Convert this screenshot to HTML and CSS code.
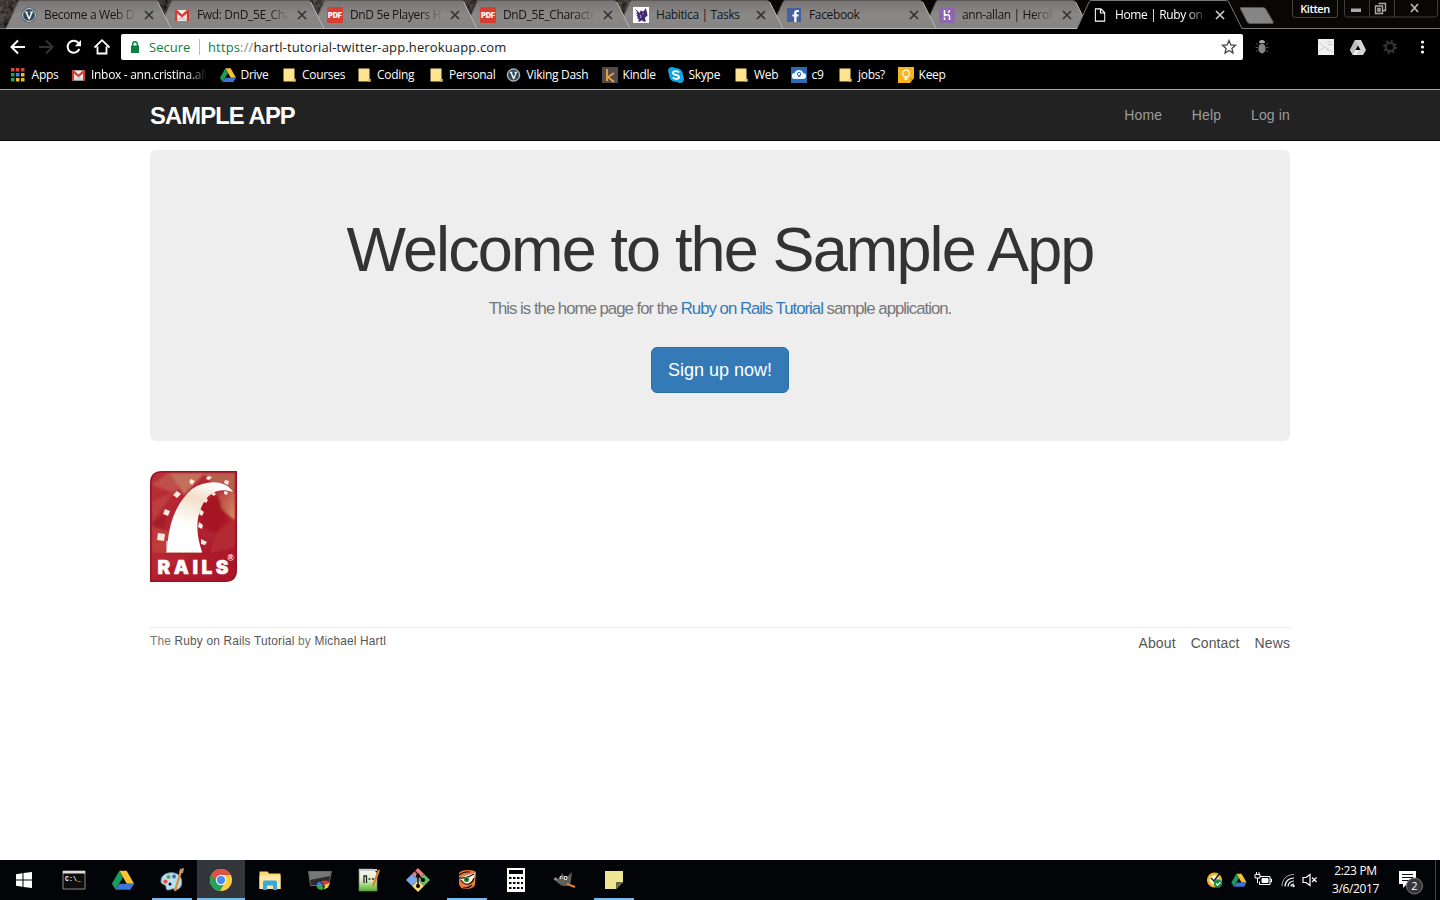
FILE: index.html
```html
<!DOCTYPE html>
<html lang="en">
<head>
<meta charset="utf-8">
<title>Home | Ruby on Rails Tutorial Sample App</title>
<link rel="stylesheet" href="styles.css">
</head>
<body>
<svg class="defs" aria-hidden="true">
  <defs>
    <linearGradient id="tabfill" x1="0" y1="0" x2="0" y2="1"><stop offset="0" stop-color="#777472"/><stop offset=".5" stop-color="#8a8887"/><stop offset="1" stop-color="#858483"/></linearGradient>
    <filter id="grain" x="0" y="0" width="1" height="1"><feTurbulence type="fractalNoise" baseFrequency=".22" numOctaves="2"/><feColorMatrix values="0 0 0 0 .24  0 0 0 0 .2  0 0 0 0 .17  .9 0 0 0 -.05"/></filter>
    <symbol id="tab" viewBox="0 0 166 29"><path d="M0 28.500L12 2Q12.700 .5 14 .5H149.500Q151 .5 151.700 2L165 28.500Z" fill="url(#tabfill)"/><path d="M0 28.500L12 2Q12.700 .5 14 .5H149.500" fill="none" stroke="#5d5b5a" stroke-width="1"/><path d="M151.700 2L165 28.500H0" fill="none" stroke="#b9b7b6"/></symbol>
    <symbol id="close" viewBox="0 0 10 10"><path d="M1 1L9 9M9 1L1 9" stroke="currentColor" stroke-width="1.700"/></symbol>
    <symbol id="viking" viewBox="0 0 16 16"><circle cx="8" cy="8" r="7.500" fill="#344957"/><circle cx="8" cy="8" r="6.400" fill="none" stroke="#d5e0e7" stroke-width="1"/><path d="M3.800 4.500h3v.9l-.5.3L8.300 10l1.500-4-.9-.7v-.8h3.300v.9l-.7.3L8.800 12.500H7.600L4.600 5.700l-.8-.3z" fill="#f1f5f7"/></symbol>
    <symbol id="gmail" viewBox="0 0 16 16"><path d="M1.500 3h13v11h-13z" fill="#eceaea"/><path d="M3 13l5-4 5 4" fill="#d2d0d0"/><path d="M1 3h2l5 4.500L13 3h2v11h-2.200V6.500L8 10.500 3.200 6.500V14H1z" fill="#d63b32"/></symbol>
    <symbol id="pdf" viewBox="0 0 16 16"><rect width="16" height="16" rx="1.500" fill="#d93d32"/><text x="8" y="10.800" text-anchor="middle" font-family="Inter" font-size="7.300" font-weight="900" textLength="14" lengthAdjust="spacingAndGlyphs" fill="#fff">PDF</text></symbol>
    <symbol id="folder" viewBox="0 0 13 14"><path d="M.5.5h11v10l1 .7v2.300H.5z" fill="#ffe48f"/><path d="M10 11h2.500v2.500H10z" fill="#e5c35c"/></symbol>
    <symbol id="gdrive" viewBox="0 0 24 22"><path d="M8 1h8l8 14h-8z" fill="#f9c12d"/><path d="M8 1l4 7-8 13.500L0 15z" fill="#1b9a5a"/><path d="M8.200 15H24l-4 6.500H4z" fill="#3d74d8"/></symbol>
    <symbol id="page" viewBox="0 0 11 14"><path d="M.8.8h5.500l4 4v8.400H.8zM6 1v4h4" fill="none" stroke="#fff" stroke-width="1.200"/></symbol>
  </defs>
</svg>

<header class="browser">
  <svg class="strip-bg" width="1440" height="29"><rect width="1440" height="29" fill="#080706"/><rect width="640" height="29" fill="#4b413a" filter="url(#grain)"/></svg>
  <div class="tabs">
    <div class="tab"><svg class="shape"><use href="#tab"/></svg><svg class="fav"><use href="#viking"/></svg><span class="ttl fade">Become a Web D</span><svg class="x"><use href="#close"/></svg></div>
    <div class="tab"><svg class="shape"><use href="#tab"/></svg><svg class="fav"><use href="#gmail"/></svg><span class="ttl fade">Fwd: DnD_5E_Cha</span><svg class="x"><use href="#close"/></svg></div>
    <div class="tab"><svg class="shape"><use href="#tab"/></svg><svg class="fav"><use href="#pdf"/></svg><span class="ttl fade">DnD 5e Players H</span><svg class="x"><use href="#close"/></svg></div>
    <div class="tab"><svg class="shape"><use href="#tab"/></svg><svg class="fav"><use href="#pdf"/></svg><span class="ttl fade">DnD_5E_Characte</span><svg class="x"><use href="#close"/></svg></div>
    <div class="tab"><svg class="shape"><use href="#tab"/></svg><svg class="fav" viewBox="0 0 16 16"><path fill="#fff" d="M0 0h16v16H0z"/><path d="M2 1.500l3 3 1.500 1.500L8 3l1 1.500L11 4l1.500-3L14 5l.5 4-2 1-.5 1.500 1 3h-3l-1-1.500-2 1.500H5L6 12l-2-.5 1-1.500-2-1.500 2-.5-2.500-2 2 .3z" fill="#432874"/><path d="M7 8l1 1.500L7 11M10.500 6.500l-1 .7" stroke="#fff" stroke-width=".7" fill="none"/></svg><span class="ttl">Habitica | Tasks</span><svg class="x"><use href="#close"/></svg></div>
    <div class="tab"><svg class="shape"><use href="#tab"/></svg><svg class="fav" viewBox="0 0 16 16"><path fill="#4560a0" d="M1 1h14v14H1z"/><path d="M8.200 15V9.600H6.400V7.400h1.800V5.800C8.200 3.800 9.400 2.900 11 2.900h1.800v2.100h-1.200c-.9 0-1.100.4-1.100 1.100v1.300h2.200l-.3 2.200h-1.900V15z" fill="#fff"/></svg><span class="ttl">Facebook</span><svg class="x"><use href="#close"/></svg></div>
    <div class="tab"><svg class="shape"><use href="#tab"/></svg><svg class="fav" viewBox="0 0 16 16"><rect width="16" height="16" rx="2" fill="#8d68b0"/><path d="M5.500 3v5.500c2-1 5-1.300 5 .8V13M10.500 3c0 1-.5 2-1.300 2.800M5.500 10.500v2.500" stroke="#fff" stroke-width="1.500" fill="none"/></svg><span class="ttl fade">ann-allan | Herok</span><svg class="x"><use href="#close"/></svg></div>
    <div class="tab active"><svg class="shape" viewBox="0 0 166 29"><path d="M0 28.500L12 2Q12.700 .5 14 .5H149.500Q151 .5 151.700 2L165 28.500V29H0z" fill="#000"/><path d="M0 28.500L12 2Q12.700 .5 14 .5H149.500Q151 .5 151.700 2L165 28.500" fill="none" stroke="#777"/></svg><svg class="fav" viewBox="-2.500 -1 16 16"><use href="#page" width="11" height="14"/></svg><span class="ttl fade">Home | Ruby on R</span><svg class="x"><use href="#close"/></svg></div>
    <svg class="newtab" viewBox="0 0 34 17"><path d="M1 .5h22q2 0 3 2l7 12q1 2-1 2H10q-2 0-3-2L.5 2Q0 .5 1 .5" fill="#858585" stroke="#555"/></svg>
    <div class="win">
      <span class="user">Kitten</span>
      <svg class="winbtns" viewBox="0 0 94 18"><path d="M.5 0v14q0 3 3 3h87q3 0 3-3V0M25.500 0v17M50.500 0v17" fill="none" stroke="#3e3e3e"/><path d="M7 8.500h10v3.500H7z" fill="#aaa"/><path d="M34.500 3.500h7v7h-3M31.500 6h7v7.500h-7zM34 8.500h2V11h-2z" fill="none" stroke="#aaa" stroke-width="1.400"/><path d="M67 4l7 8M74 4l-7 8" stroke="#b5b5b5" stroke-width="1.800"/></svg>
    </div>
  </div>
  <div class="toolbar">
    <svg class="nav" viewBox="0 0 112 18"><g fill="none" stroke="#fff" stroke-width="2"><path d="M16 9H3M9 2.500L2.500 9l6.500 6.500"/><path d="M30 9H43M37 2.500L43.500 9l-6.500 6.500" stroke="#333"/><path d="M69.500 5.200A6 6 0 1 0 70.300 10.800"/><path d="M85.500 9.500L93 2.200l7.500 7.300M88.500 8.500v7h9v-7" stroke-width="1.800"/></g><path d="M72 2v6.200h-6.200z" fill="#fff"/></svg>
    <div class="omni">
      <svg class="lock" viewBox="0 0 8 12"><path d="M0 4.500h8V12H0z" fill="#0b8043"/><path d="M1.700 5V3a2.300 2.300 0 0 1 4.600 0v2" fill="none" stroke="#0b8043" stroke-width="1.400"/></svg>
      <span class="secure">Secure</span><span class="bar"></span>
      <span class="url"><b>https</b><i>://</i>hartl-tutorial-twitter-app.herokuapp.com</span>
      <svg class="star" viewBox="0 0 16 16"><path d="M8 1.500l1.800 4.400 4.700.4-3.600 3.100 1.100 4.600L8 11.500 4 14l1.100-4.600-3.600-3.100 4.700-.4z" fill="none" stroke="#444" stroke-width="1.300"/></svg>
    </div>
    <svg class="exts" viewBox="0 0 190 20"><g stroke="#555" stroke-width="1" fill="none"><path d="M13 6l2 2M12.500 10.500H15M13 15l2-2M25 6l-2 2M25.500 10.500H23M25 15l-2-2"/></g><ellipse cx="19" cy="11.500" rx="3.600" ry="5" fill="#858585"/><path d="M16 6a3 3 0 0 1 6 0z" fill="#aaa"/>
      <path d="M75 2h16v16H75z" fill="#f1f1f1"/><path d="M84 5h5M85 7.500h5M76 14l6-4 8 5M83 12l3 2M76 5l6 6" stroke="#ccc" fill="none" stroke-width="1"/>
      <path d="M112 3h6l5 10-3 5h-10l-3-5z" fill="#d5d5d5"/><path d="M107 13h9l-3 5h-3z" fill="#efefef"/><path d="M112 3l3 5-5 10-3-5z" fill="#bcbcbc"/><path d="M115 8.500l2.500 4.500h-5z" fill="#000"/>
      <circle cx="147" cy="10" r="4.200" fill="none" stroke="#333" stroke-width="2.300"/><circle cx="147" cy="10" r="6" fill="none" stroke="#333" stroke-width="2" stroke-dasharray="2.200 2.512"/>
      <g fill="#fff"><circle cx="179.500" cy="5" r="1.600"/><circle cx="179.500" cy="10" r="1.600"/><circle cx="179.500" cy="15" r="1.600"/></g></svg>
  </div>
  <nav class="marks">
    <a><svg viewBox="0 0 16 16"><g fill="#dc4437"><path d="M0 1h3.500v3.500H0zM5 1h3.500v3.500H5zM10 1h3.500v3.500H10z"/></g><path d="M0 6h3.500v3.500H0z" fill="#25a25a"/><path d="M5 6h3.500v3.500H5z" fill="#4380e8"/><path d="M10 6h3.500v3.500H10zM5 11h3.500v3.500H5zM10 11h3.500v3.500H10z" fill="#eeb829"/><path d="M0 11h3.500v3.500H0z" fill="#25a25a"/></svg><span>Apps</span></a>
    <a class="inbox"><svg><use href="#gmail" width="15" height="16"/></svg><span>Inbox - ann.cristina.all</span></a>
    <a><svg viewBox="0 -1 24 24"><use href="#gdrive" width="24" height="22"/></svg><span>Drive</span></a>
    <a class="f"><svg><use href="#folder"/></svg><span>Courses</span></a>
    <a class="f"><svg><use href="#folder"/></svg><span>Coding</span></a>
    <a class="f"><svg><use href="#folder"/></svg><span>Personal</span></a>
    <a><svg><use href="#viking" width="15" height="16"/></svg><span>Viking Dash</span></a>
    <a><svg viewBox="0 0 16 16"><path d="M0 0h16v16H0z" fill="#504c48"/><path d="M5 2v12M12 6l-6 4 6 5" stroke="#f2a044" stroke-width="1.800" fill="none"/></svg><span>Kindle</span></a>
    <a><svg viewBox="0 0 16 16"><circle cx="8" cy="8" r="7" fill="#12a5e5"/><circle cx="4" cy="4" r="3.900" fill="#12a5e5"/><circle cx="12" cy="12" r="3.900" fill="#12a5e5"/><path d="M11 5.500C9.500 3.500 5 3.800 5 6c0 2.600 6 1.400 6 4 0 2.400-4.500 2.500-6.200.5" fill="none" stroke="#fff" stroke-width="1.800"/></svg><span>Skype</span></a>
    <a class="f"><svg><use href="#folder"/></svg><span>Web</span></a>
    <a><svg viewBox="0 0 16 16"><path d="M0 0h16v16H0z" fill="#2d68b7"/><path d="M4 12a3 3 0 0 1-.3-6 4.500 4.500 0 0 1 8.400 0A3 3 0 0 1 12 12z" fill="#eff7ff"/><circle cx="8" cy="7" r="1.700" fill="none" stroke="#3372bf"/><path d="M9.500 7q0 3-2.500 3" fill="none" stroke="#3372bf"/></svg><span>c9</span></a>
    <a class="f"><svg><use href="#folder"/></svg><span>jobs?</span></a>
    <a><svg viewBox="0 0 16 16"><path d="M0 0h16v11l-4 5H0z" fill="#f4b51d"/><path d="M16 11h-4v5z" fill="#d99a10"/><circle cx="8" cy="6.500" r="3.300" fill="none" stroke="#fff" stroke-width="1.200"/><path d="M6.500 9.500h3V13h-3z" fill="#fff3cf"/></svg><span>Keep</span></a>
  </nav>
</header>

<main class="page">
  <div class="navbar"><div class="container row">
    <a class="logo">SAMPLE APP</a>
    <nav class="menu"><a>Home</a><a>Help</a><a>Log in</a></nav>
  </div></div>
  <div class="container">
    <section class="jumbotron">
      <h1>Welcome to the Sample App</h1>
      <h2>This is the home page for the <a>Ruby on Rails Tutorial</a> sample application.</h2>
      <a class="btn">Sign up now!</a>
    </section>
    <svg class="rails" viewBox="0 0 87 111">
      <defs><linearGradient id="red" x1="0" y1="0" x2="1" y2="1"><stop offset="0" stop-color="#b9323a"/><stop offset=".5" stop-color="#b21e2c"/><stop offset="1" stop-color="#a91429"/></linearGradient><linearGradient id="track" x1=".6" y1="0" x2=".3" y2="1"><stop offset="0" stop-color="#fff"/><stop offset=".25" stop-color="#f3dfc8"/><stop offset=".65" stop-color="#fff"/></linearGradient>
      <linearGradient id="gold" x1="0" y1="0" x2="1" y2="1"><stop offset="0" stop-color="#d08b64" stop-opacity=".2"/><stop offset="1" stop-color="#d99b6c"/></linearGradient><filter id="soft"><feGaussianBlur stdDeviation=".8"/></filter></defs>
      <path d="M12 .8H86.200V99q0 11.200-11 11.200H.8V12Q.8.8 12 .8z" fill="url(#red)"/>
      <g filter="url(#soft)"><path d="M2 14L18 2h26L24 22z" fill="#bf4f4b"/><path d="M20 2h35L34 24z" fill="#c2705c"/><path d="M52 2h33v22L66 16z" fill="#b86150"/><path d="M2 30l22-9L2 52z" fill="#bd3d40"/><path d="M2 52l16-12-8 30z" fill="#a41f2c"/><path d="M2 55l18 6-4 21H2z" fill="#bd3d3b"/><path d="M50 34l18-10 12 15-14 23-15-8z" fill="#a31223"/><path d="M66 20l19 3v27l-13-12z" fill="url(#gold)"/><path d="M66 62l19-15v29L60 82z" fill="#b42c31"/><path d="M48 57l18 5-12 20z" fill="#ac2330"/><path d="M2 84h40L20 96 2 108z" fill="#b52631"/></g>
      <path d="M16 70h3v11h33v1H16z" fill="#d9a8a2"/>
      <path d="M17 81C18 56 24 34 42 18C56 8 76 9 83 21C71 17 61 20 54 31C45 46 46 63 52 81z" fill="url(#track)"/>
      <g fill="#ffe9df"><path d="M8 62l7 1-1 7-7-1zM15 38l5 2-2 5-5-2zM27 20l4 3-4 4-4-3zM41 8l4 2-3 4-3-3zM58 5l4 1-3 3-3-1zM75 9l4 1-1 4-4-2z"/><path d="M50 38l4 3-2 4-3-2zM49 51l4 3-1 4-4-2zM51 68l6 3-2 3-4-1zM55 26l3 3-2 3-3-2zM63 20l3 3-2 2-3-2zM74 20l4 1-1 3-3-1z"/></g>
      <text x="7.500" y="102.500" font-family="Inter" font-weight="900" font-size="19" textLength="71" fill="#fff" stroke="#fff" stroke-width=".5">RAILS</text>
      <text x="77.500" y="90" font-family="Liberation Sans" font-weight="bold" font-size="8.500" fill="#fff">®</text>
      <path d="M12 .8H86.200V99q0 11.200-11 11.200H.8V12Q.8.8 12 .8z" fill="none" stroke="#941326" stroke-width="1.600"/>
    </svg>
    <footer class="footer"><small>The <a>Ruby on Rails Tutorial</a> by <a>Michael Hartl</a></small><nav><a>About</a><a>Contact</a><a>News</a></nav></footer>
  </div>
</main>

<div class="taskbar">
  <div class="apps">
    <span class="t start"><svg viewBox="0 0 24 24"><path d="M4 6.200l6.500-1v6.300H4zM11.500 5L20 4v7.500h-8.500zM4 12.500h6.500v6.300l-6.500-1zM11.500 12.500H20V20l-8.500-1z" fill="#fff"/></svg></span>
    <span class="t"><svg viewBox="0 0 24 24"><path d="M1 3h22v18H1z" fill="#0c0c0c" stroke="#8a8a8a"/><path d="M1 3h22v2.500H1z" fill="#dedede"/><text x="3" y="12.500" font-family="Liberation Mono" font-weight="bold" font-size="6.500" textLength="16" fill="#fff">C:\_</text></svg></span>
    <span class="t"><svg viewBox="-1 -1 26 24"><use href="#gdrive" width="24" height="22"/></svg></span>
    <span class="t open"><svg viewBox="0 0 24 24"><path d="M1 13C1 6 9 4 14 5c7 1 9 8 7 13-2 4-5 4-7 3s-3 1-6 1c-3 0-1-4-3-5s-4-1-4-4z" fill="#b9dff1" stroke="#7296ab"/><circle cx="5.500" cy="13.500" r="2.100" fill="#e04d44"/><circle cx="8.500" cy="9" r="2" fill="#57a947"/><circle cx="14" cy="8.500" r="2" fill="#4269b7"/><circle cx="10" cy="16" r="1.500" fill="#111"/><path d="M21 3l-6 20" stroke="#dc8f35" stroke-width="2.400"/><path d="M19 5l1-4 4-1-1 5z" fill="#c3966b"/></svg></span>
    <span class="t open current"><svg viewBox="0 0 24 24"><circle cx="12" cy="12" r="11" fill="#ffce43"/><path d="M12 12L2.500 6.500A11 11 0 0 0 11 23l5-8.500z" fill="#20a15d"/><path d="M2.500 6.500A11 11 0 0 1 21.700 7H12v5l-4.500 2.500z" fill="#de5145"/><circle cx="12" cy="12" r="5.200" fill="#fff"/><circle cx="12" cy="12" r="4.200" fill="#4a8af4"/></svg></span>
    <span class="t"><svg viewBox="0 0 24 24"><path d="M1.500 3.500h8l1.500 2h11.500V21h-21z" fill="#f9d875"/><path d="M1.500 7.500h21V21h-21z" fill="#ffe8a2"/><path d="M5 22v-8q0-1.500 1.500-1.500h11Q19 12.500 19 14v8h-4v-4.500H9V22z" fill="#38a9df"/></svg></span>
    <span class="t"><svg viewBox="0 0 24 24"><path d="M.5 3.500h23l-3 14h-18z" fill="#2b2b2b" stroke="#666"/><path d="M1 4h22l-1 4-20 4z" fill="#777"/><path d="M9 17l3-3 3 3-2 3z" fill="#3384e8"/><path d="M13 13l6-.5 2 2-5 2.500z" fill="#e33932"/><path d="M17 16.500l5-2-2 5-4 2z" fill="#f4cd3d"/><path d="M8 17l4-1 4 4-2 2-4-1z" fill="#32aa4c"/><path d="M9 15l3-1.500 1 3-3 1z" fill="#3384e8"/></svg></span>
    <span class="t"><svg viewBox="0 0 24 24"><defs><linearGradient id="npp" x1="0" y1="0" x2="0" y2="1"><stop stop-color="#f5f7ea"/><stop offset=".5" stop-color="#dfeecb"/><stop offset="1" stop-color="#51b51d"/></linearGradient></defs><path d="M2 1h14l4 4v18H2z" fill="url(#npp)" stroke="#777" stroke-width=".7"/><path d="M2 1h18v2H2z" fill="#ccc"/><path d="M7 15V8h2.500v7M11.500 11h2M15 11h2" stroke="#272d25" fill="none" stroke-width="1.300"/><path d="M22 2l-6 16" stroke="#d68225" stroke-width="2.300"/></svg></span>
    <span class="t"><svg viewBox="0 0 24 24"><path d="M12 0l6 6-6 6-6-6z" fill="#ee8180"/><path d="M6 6l6 6-6 6-6-6z" fill="#7ca7ed"/><path d="M18 6l6 6-6 6-6-6z" fill="#69bb66"/><path d="M12 12l6 6-6 6-6-6z" fill="#f4dc78"/><path d="M12 5v14M9 3l8 9" stroke="#202025" stroke-width="1.500"/><circle cx="12" cy="8" r="2"/><circle cx="12" cy="18" r="2"/><circle cx="17" cy="12" r="2"/></svg></span>
    <span class="t open"><svg viewBox="0 0 24 24"><path d="M4 5q2-3 9-3 6 0 8 2l-1 13q-2 4-9 4-6 0-7-5z" fill="#ee7a3c"/><path d="M5 10Q11 7 20 5q-1 8-6 11-6 1-9-6z" fill="#f5f5e4"/><path d="M4 7Q9 3 15 4M4 10q7 1 15-4M6 12q3 5 8 4 4-2 5-6M8 20q6 0 9-3" stroke="#241916" stroke-width="1.200" fill="none"/><circle cx="11.500" cy="11.500" r="2.600" fill="#348849"/><circle cx="11.500" cy="11.500" r="1" fill="#122"/></svg></span>
    <span class="t"><svg viewBox="0 0 24 24"><path d="M3 0h18v24H3z" fill="#fff"/><path d="M5 2h14v4H5zM5 9h2.500v2H5zM9 9h2.500v2H9zM13 9h2.500v2H13zM17 9h2v2h-2zM5 14h2.500v2H5zM9 14h2.500v2H9zM13 14h2.500v2H13zM17 14h2v2h-2zM5 19h2.500v2H5zM9 19h2.500v2H9zM13 19h2.500v2H13zM17 19h2v2h-2z" fill="#000"/></svg></span>
    <span class="t"><svg viewBox="0 0 24 24"><path d="M2 11l5-1 2-5 2 3h4l4-4-1 8q0 6-6 6-5 0-10-6z" fill="#645e59"/><path d="M14 16l8 3" stroke="#d98139" stroke-width="2"/><circle cx="8" cy="9.500" r="1.500" fill="#fff"/><circle cx="12.500" cy="10" r="1.900" fill="#fff"/><circle cx="8.300" cy="9.700" r=".7"/><circle cx="12.500" cy="10" r=".9"/><circle cx="2.500" cy="11" r="1.500" fill="#999"/></svg></span>
    <span class="t open"><svg viewBox="0 0 24 24"><path d="M3 3h18v11l-7 7H3z" fill="#f0e595"/><path d="M21 14h-7v7z" fill="#6c683d"/></svg></span>
  </div>
  <svg class="tray" viewBox="0 0 116 20">
    <circle cx="8.500" cy="10" r="6.200" fill="#fff8da" stroke="#efb52d" stroke-width="2.800"/><path d="M5 8l3 3 6-8" fill="none" stroke="#222" stroke-width="1.500"/><circle cx="12" cy="13.500" r="4.200" fill="#178a43"/><path d="M10 13.500l1.500 1.600 3-3" fill="none" stroke="#fff" stroke-width="1.200"/>
    <use href="#gdrive" x="25" y="3" width="16" height="14"/>
    <g fill="none" stroke="#fff"><path d="M54 6.500h10v8H53.500v-3M64 9h1.500v3H64"/><path d="M49 4.500h5v3.500h-5zM50.500 2v2.500M53 2v2.500M51.500 8v5"/><path d="M56 8.500h6v4h-6z" fill="#fff"/><path d="M76 16C76 9 81 4.500 88 4.500" stroke="#aaa"/><path d="M79 16.500C79 11 83 8 88 8M82 16.500C82 13 85 11 88 11M85 16.500Q85 14 88 14" stroke-width="1.200"/><path d="M97 7.500h3l4-3v11l-4-3h-3zM106 7.500l4.500 4.500M110.500 7.500L106 12" stroke-width="1.200"/></g><circle cx="87.500" cy="16" r="1.200" fill="#fff"/>
  </svg>
  <div class="clock"><span>2:23 PM</span><span>3/6/2017</span></div>
  <svg class="note" viewBox="0 0 26 26"><path d="M0 2h17v13H8l-4 4v-4H0z" fill="#fff"/><path d="M3 5.500h11M3 8.500h11M3 11.500h8" stroke="#111" stroke-width="1.200"/><circle cx="15.500" cy="17" r="8" fill="#343638" stroke="#777"/><text x="15.500" y="21" text-anchor="middle" font-family="Open Sans" font-size="11" fill="#fff">2</text></svg>
</div>
</body>
</html>
```
FILE: styles.css
```css
* { box-sizing: border-box; }
body { margin: 0; width: 1440px; height: 900px; overflow: hidden; display: flex; flex-direction: column; background: #fff; font-family: "Liberation Sans", Arial, sans-serif; font-size: 14px; color: #333; }
.defs { position: absolute; width: 0; height: 0; }
svg { display: block; flex: none; }

.browser { position: relative; height: 90px; flex: none; background: #000; border-bottom: 1px solid #a5a5a5; font-family: "Open Sans", sans-serif; font-size: 12px; }
.strip-bg { position: absolute; top: 0; left: 0; border-bottom: 1px solid #777; }
.tabs { position: relative; height: 29px; display: flex; padding-left: 6px; }
.tab { position: relative; width: 166px; height: 29px; margin-right: -13px; flex: none; display: flex; align-items: center; padding: 0 17px 0 15px; color: #151515; }
.tab:nth-child(1) { z-index: 7; } .tab:nth-child(2) { z-index: 6; } .tab:nth-child(3) { z-index: 5; } .tab:nth-child(4) { z-index: 4; } .tab:nth-child(5) { z-index: 3; } .tab:nth-child(6) { z-index: 2; } .tab:nth-child(7) { z-index: 1; }
.tab.active { z-index: 9; color: #fff; }
.shape { position: absolute; top: 0; left: 0; width: 166px; height: 29px; }
.fav { position: relative; width: 16px; height: 16px; margin-top: 1px; }
.ttl { position: relative; width: 91px; margin-left: 7px; white-space: nowrap; letter-spacing: -.36px; }
.fade { -webkit-mask-image: linear-gradient(90deg, #000 78%, transparent 102%); mask-image: linear-gradient(90deg, #000 78%, transparent 102%); }
.x { position: relative; width: 10px; height: 10px; margin-left: 9px; margin-top: 1px; color: #333; }
.active .x { color: #ccc; }
.newtab { width: 34px; height: 17px; margin: 7px 0 0 10px; z-index: 2; }
.win { margin-left: auto; padding-right: 2px; display: flex; gap: 6px; }
.user { width: 46px; height: 18px; border: 1px solid #444; border-top: 0; border-radius: 0 0 4px 4px; color: #fff; font-size: 11px; font-weight: 600; letter-spacing: -.4px; line-height: 17px; text-align: center; }
.winbtns { width: 94px; height: 18px; }

.toolbar { height: 36px; padding: 5px 0 5px 9px; display: flex; }
.nav { width: 112px; height: 18px; margin-top: 4px; }
.omni { width: 1122px; height: 26px; background: #fff; border-radius: 2px; display: flex; align-items: center; padding: 0 6px 0 10px; font-size: 13px; }
.lock { width: 8px; height: 12px; }
.secure { width: 42px; margin-left: 10px; color: #0b8043; white-space: nowrap; letter-spacing: 0; }
.bar { width: 1px; height: 16px; background: #bbb; margin: 0 8px; }
.url { color: #222; letter-spacing: .14px; white-space: nowrap; }
.url b { font-weight: 400; color: #0b8043; }
.url i { font-style: normal; color: #888; }
.star { width: 16px; height: 16px; margin-left: auto; }
.exts { width: 190px; height: 20px; margin-top: 3px; }

.marks { height: 24px; padding-left: 11px; display: grid; grid-template-columns: 60px 149px 63px 75px 72px 76px 96px 66px 67px 56px 48px 59px 60px; align-items: center; margin-top: -2px; color: #fff; }
.marks a { display: flex; align-items: center; min-width: 0; }
.marks svg { width: 16px; height: 16px; }
.marks span { margin: -2px 0 0 4.6px; white-space: nowrap; letter-spacing: -.3px; }
.marks .f svg { width: 13px; height: 14px; }
.marks .f span { margin-left: 6px; }
.marks .inbox span { margin-left: 4px; -webkit-mask-image: linear-gradient(90deg, #000 82%, transparent); mask-image: linear-gradient(90deg, #000 82%, transparent); }

.page { flex: 1; }
.container { width: 1140px; margin: 0 auto; }
.navbar { height: 51px; background: #222; border-bottom: 1px solid #080808; }
.row { display: flex; justify-content: space-between; }
.logo { color: #fff; font-size: 23.8px; font-weight: 700; letter-spacing: -.9px; line-height: 51px; }
.menu { display: flex; gap: 29.7px; color: #9d9d9d; line-height: 50px; letter-spacing: .15px; }
.jumbotron { height: 291px; margin-top: 9px; padding-top: 65px; background: #eee; border-radius: 6px; text-align: center; }
.jumbotron h1 { margin: 0; font-size: 63px; line-height: 69px; font-weight: 400; letter-spacing: -1.87px; }
.jumbotron h2 { margin: 15px 0 28px; font-size: 16.8px; line-height: 20px; font-weight: 400; letter-spacing: -1px; color: #777; }
.jumbotron h2 a { color: #337ab7; }
.btn { display: inline-block; padding: 10px 16px; border: 1px solid #2e6da4; border-radius: 6px; background: #337ab7; color: #fff; font-size: 18px; line-height: 24px; }
.rails { width: 87px; height: 111px; margin-top: 30px; }
.footer { margin-top: 45px; padding-top: 5px; border-top: 1px solid #eaeaea; display: flex; justify-content: space-between; color: #777; }
.footer small { font-size: 11.9px; line-height: 16px; letter-spacing: .17px; }
.footer a { color: #555; }
.footer nav { display: flex; gap: 15px; line-height: 20px; letter-spacing: .1px; }

.taskbar { height: 40px; flex: none; background: #020407; display: flex; align-items: center; }
.apps { display: flex; gap: 1.1px; }
.t { width: 48px; height: 40px; display: flex; align-items: center; justify-content: center; }
.start { margin-right: 1px; }
.t svg { width: 24px; height: 24px; }
.open { background: linear-gradient(#76b9ed, #76b9ed) center bottom / 40px 2px no-repeat; }
.current { background-color: #33363a; background-size: 48px 2px; }
.tray { width: 116px; height: 20px; margin-left: auto; }
.clock { width: 69px; padding-right: 2px; text-align: center; color: #fff; font: 12px/18px "Open Sans", sans-serif; letter-spacing: -.35px; display: flex; flex-direction: column; }
.note { width: 26px; height: 26px; margin: 4px 10px 0 8px; }
.taskbar::after { content: ""; height: 40px; border-left: 1px solid #444; width: 4px; }
```
